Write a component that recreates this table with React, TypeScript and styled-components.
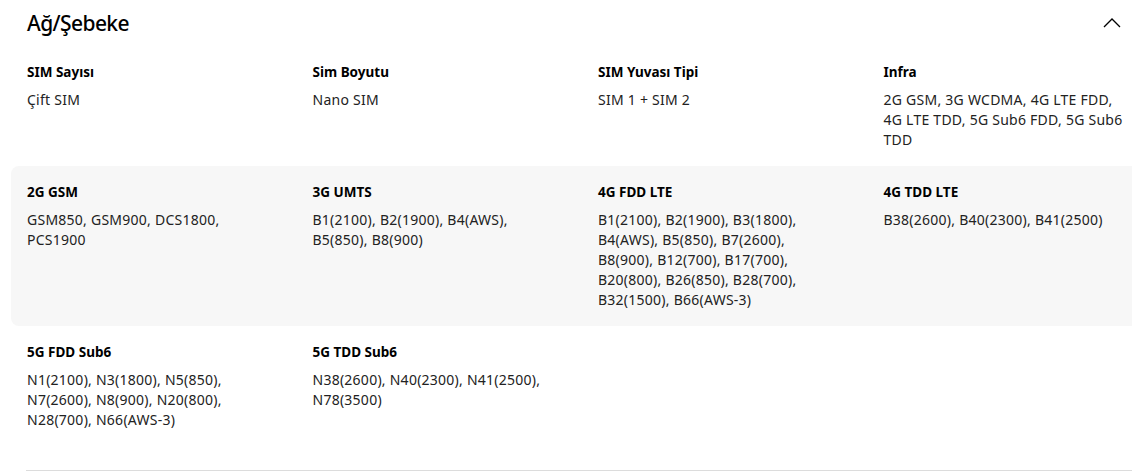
import React from "react";
import styled, { createGlobalStyle } from "styled-components";

const Global = createGlobalStyle`
  html, body { margin: 0; padding: 0; background: #fff; overflow: hidden; }
  body { font-family: "Noto Sans", "Liberation Sans", sans-serif; color: #000; }
`;

const Section = styled.section`
  width: 1180px;
  padding-bottom: 4px;
`;

const Header = styled.div`
  display: flex;
  align-items: center;
  justify-content: space-between;
  height: 46px;
  padding: 0 0 0 27px;
  width: 1121px;
  box-sizing: border-box;
`;

const Title = styled.h2`
  margin: 0;
  font-size: 21px;
  font-weight: 500;
  letter-spacing: -0.6px;
  color: #000;
`;

const Toggle = styled.button`
  border: 0;
  background: none;
  padding: 0;
  width: 18px;
  height: 10px;
  display: flex;
  cursor: pointer;
`;

const Row = styled.div<{ $shaded?: boolean }>`
  display: grid;
  grid-template-columns: repeat(4, 285.5px);
  padding: 16px 0 16px 16px;
  margin-left: 11px;
  background: ${(p) => (p.$shaded ? "#f7f7f7" : "transparent")};
  border-radius: 8px 0 0 8px;
`;

const Item = styled.div`
  display: flex;
  flex-direction: column;
  gap: 8px;
  padding-right: 45.5px;
`;

const Label = styled.div`
  font-size: 13.5px;
  font-weight: 700;
  line-height: 20px;
  color: #000;
`;

const Value = styled.div`
  font-size: 14px;
  line-height: 20px;
  letter-spacing: 0.25px;
  color: #222;
`;

const Divider = styled.hr`
  margin: 24px 0 0 26px;
  border: 0;
  border-top: 1px solid #dcdcdc;
  width: 1150px;
`;

type Spec = { label: string; value: string };

const rows: { shaded?: boolean; items: Spec[] }[] = [
  {
    items: [
      { label: "SIM Sayısı", value: "Çift SIM" },
      { label: "Sim Boyutu", value: "Nano SIM" },
      { label: "SIM Yuvası Tipi", value: "SIM 1 + SIM 2" },
      {
        label: "Infra",
        value: "2G GSM, 3G WCDMA, 4G LTE FDD, 4G LTE TDD, 5G Sub6 FDD, 5G Sub6 TDD",
      },
    ],
  },
  {
    shaded: true,
    items: [
      { label: "2G GSM", value: "GSM850, GSM900, DCS1800, PCS1900" },
      { label: "3G UMTS", value: "B1(2100), B2(1900), B4(AWS), B5(850), B8(900)" },
      {
        label: "4G FDD LTE",
        value:
          "B1(2100), B2(1900), B3(1800), B4(AWS), B5(850), B7(2600), B8(900), B12(700), B17(700), B20(800), B26(850), B28(700), B32(1500), B66(AWS-3)",
      },
      { label: "4G TDD LTE", value: "B38(2600), B40(2300), B41(2500)" },
    ],
  },
  {
    items: [
      {
        label: "5G FDD Sub6",
        value: "N1(2100), N3(1800), N5(850), N7(2600), N8(900), N20(800), N28(700), N66(AWS-3)",
      },
      { label: "5G TDD Sub6", value: "N38(2600), N40(2300), N41(2500), N78(3500)" },
    ],
  },
];

export default function App() {
  return (
    <>
      <Global />
      <Section>
        <Header>
          <Title>Ağ/Şebeke</Title>
          <Toggle aria-label="Daralt">
            <svg width="18" height="10" viewBox="0 0 18 10" fill="none">
              <path d="M1 9 L9 1 L17 9" stroke="#000" strokeWidth="1.3" />
            </svg>
          </Toggle>
        </Header>
        {rows.map((r, i) => (
          <Row key={i} $shaded={r.shaded}>
            {r.items.map((it) => (
              <Item key={it.label}>
                <Label>{it.label}</Label>
                <Value>{it.value}</Value>
              </Item>
            ))}
          </Row>
        ))}
        <Divider />
      </Section>
    </>
  );
}
